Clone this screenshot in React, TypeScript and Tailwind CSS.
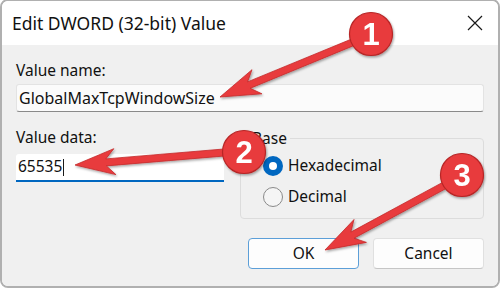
import React from "react"

type Pt = [number, number]

// polygon for a fat annotation arrow, tip first
function arrowPoints(tip: Pt, tail: Pt, headLen = 40, headHalf = 13, shaftHalf = 3.5) {
  const dx = tail[0] - tip[0]
  const dy = tail[1] - tip[1]
  const len = Math.hypot(dx, dy)
  const ux = dx / len
  const uy = dy / len
  const nx = -uy
  const ny = ux
  const at = (d: number, o: number) =>
    `${(tip[0] + ux * d + nx * o).toFixed(1)},${(tip[1] + uy * d + ny * o).toFixed(1)}`
  const neck = headLen * 0.78
  return [
    at(0, 0),
    at(headLen, headHalf),
    at(neck, shaftHalf),
    at(len, shaftHalf),
    at(len, -shaftHalf),
    at(neck, -shaftHalf),
    at(headLen, -headHalf),
  ].join(" ")
}

const arrows: { tip: Pt; tail: Pt }[] = [
  { tip: [220, 97], tail: [368, 36] },
  { tip: [75, 165], tail: [242, 151] },
  { tip: [325, 250], tail: [460, 177] },
]

const badges = [
  { n: "1", x: 371, y: 34 },
  { n: "2", x: 244, y: 152 },
  { n: "3", x: 462, y: 175 },
]

const ui = { fontFamily: '"Noto Sans", "Open Sans", sans-serif' }

function Radio({ checked, label }: { checked: boolean; label: string }) {
  return (
    <div className="flex items-center h-[31px] gap-[5px]">
      {checked ? (
        <div className="w-[20px] h-[20px] rounded-full bg-[#0067c0] flex items-center justify-center">
          <div className="w-[8px] h-[8px] rounded-full bg-white" />
        </div>
      ) : (
        <div className="w-[20px] h-[20px] rounded-full border border-[#8a8a8a] bg-[#f5f5f5]" />
      )}
      <span className="text-[15.5px] text-[#111]">{label}</span>
    </div>
  )
}

export default function App() {
  return (
    <div className="w-[500px] h-[289px] bg-white relative overflow-hidden" style={ui}>
      <div className="-mt-px w-[500px] h-[289px] border-2 border-[#b0b0b0] rounded-lg overflow-hidden flex flex-col">
        <div className="h-[44px] bg-white flex items-center justify-between pl-[10px] pr-[15px] shrink-0">
          <span className="text-[17.5px] text-[#111]">Edit DWORD (32-bit) Value</span>
          <svg width="16" height="16" viewBox="0 0 16 16">
            <path d="M1 1 L15 15 M15 1 L1 15" stroke="#1a1a1a" strokeWidth="1.2" fill="none" />
          </svg>
        </div>

        <div className="flex-1 bg-[#f0f0f0] px-[14px] pt-[15px]">
          <div className="text-[15.5px] leading-[20px] text-[#111]">Value name:</div>
          <div className="mt-[4px] h-[28px] bg-[#fbfbfb] border border-[#e3e3e3] border-b-[#8a8a8a] rounded-[3px] flex items-center pl-[2px] text-[16px] text-[#111]">
            GlobalMaxTcpWindowSize
          </div>

          <div className="mt-[15px] flex items-start gap-[16px]">
            <div className="w-[208px]">
              <div className="text-[15.5px] leading-[20px] text-[#111]">Value data:</div>
              <div className="mt-[7px] h-[28px] bg-white border-b-2 border-[#0067c0] rounded-t-[3px] flex items-center pl-[2px] text-[15.5px] text-[#111]">
                65535
                <span className="inline-block w-px h-[17px] bg-[#1a1a1a] ml-px" />
              </div>
            </div>

            <fieldset className="flex-1 mt-px h-[91px] border border-[#dcdcdc] rounded-[4px] pl-[22px] pt-[2px]">
              <legend className="ml-[-14px] px-[3px] text-[15.5px] leading-[20px] text-[#111]">Base</legend>
              <Radio checked label="Hexadecimal" />
              <Radio checked={false} label="Decimal" />
            </fieldset>
          </div>

          <div className="mt-[19px] flex justify-end gap-[14px]">
            <button className="w-[111px] h-[31px] bg-[#fdfdfd] border border-[#5c9fd8] rounded-[4px] text-[15.5px] text-[#111]">
              OK
            </button>
            <button className="w-[111px] h-[31px] bg-[#fdfdfd] border border-[#e0e0e0] border-b-[#c6c6c6] rounded-[4px] text-[15.5px] text-[#111]">
              Cancel
            </button>
          </div>
        </div>
      </div>

      {/* red annotation overlay */}
      <svg className="absolute inset-0 pointer-events-none" width="500" height="289" viewBox="0 0 500 289">
        <defs>
          <filter id="sh" x="-20%" y="-20%" width="140%" height="140%">
            <feDropShadow dx="1" dy="1.5" stdDeviation="1.2" floodColor="#000" floodOpacity="0.35" />
          </filter>
        </defs>
        <g filter="url(#sh)">
          {arrows.map((a, i) => (
            <polygon key={i} points={arrowPoints(a.tip, a.tail)} fill="#e83b3c" stroke="#c42a2b" strokeWidth="0.8" strokeLinejoin="round" />
          ))}
          {badges.map((b) => (
            <g key={b.n}>
              <circle cx={b.x} cy={b.y} r="21.5" fill="#e83b3c" stroke="#b72526" strokeWidth="1.2" />
              <text
                x={b.x}
                y={b.y + 11}
                textAnchor="middle"
                fill="white"
                fontSize="31"
                fontWeight="700"
                fontFamily='"Liberation Sans", Arial, sans-serif'
              >
                {b.n}
              </text>
            </g>
          ))}
        </g>
      </svg>
    </div>
  )
}
